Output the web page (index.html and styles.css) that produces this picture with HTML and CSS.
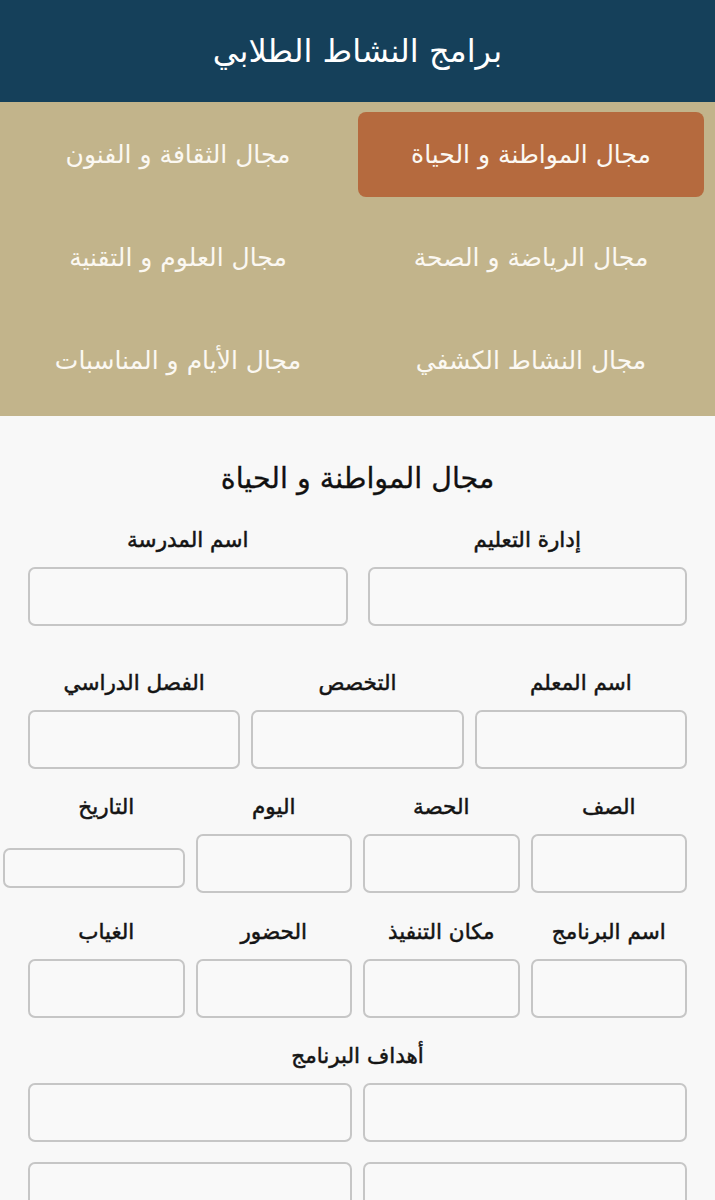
FILE: index.html
```html
<!DOCTYPE html>
<html lang="ar" dir="rtl">
<head>
<meta charset="utf-8">
<title>برامج النشاط الطلابي</title>
<link rel="stylesheet" href="styles.css">
</head>
<body>
<header class="topbar">
  <h1 class="topbar-title">برامج النشاط الطلابي</h1>
</header>
<nav class="domains">
  <a class="domain active">مجال المواطنة و الحياة</a>
  <a class="domain">مجال الثقافة و الفنون</a>
  <a class="domain">مجال الرياضة و الصحة</a>
  <a class="domain">مجال العلوم و التقنية</a>
  <a class="domain">مجال النشاط الكشفي</a>
  <a class="domain">مجال الأيام و المناسبات</a>
</nav>
<main class="form">
  <h2 class="form-title">مجال المواطنة و الحياة</h2>
  <div class="row cols-2 row-first">
    <div class="field"><label>إدارة التعليم</label><input type="text"></div>
    <div class="field"><label>اسم المدرسة</label><input type="text"></div>
  </div>
  <div class="row cols-3">
    <div class="field"><label>اسم المعلم</label><input type="text"></div>
    <div class="field"><label>التخصص</label><input type="text"></div>
    <div class="field"><label>الفصل الدراسي</label><input type="text"></div>
  </div>
  <div class="row cols-4 row-third">
    <div class="field"><label>الصف</label><input type="text"></div>
    <div class="field"><label>الحصة</label><input type="text"></div>
    <div class="field"><label>اليوم</label><input type="text"></div>
    <div class="field"><label>التاريخ</label><input type="text" class="date-input"></div>
  </div>
  <div class="row cols-4">
    <div class="field"><label>اسم البرنامج</label><input type="text"></div>
    <div class="field"><label>مكان التنفيذ</label><input type="text"></div>
    <div class="field"><label>الحضور</label><input type="text"></div>
    <div class="field"><label>الغياب</label><input type="text"></div>
  </div>
  <div class="goals">
    <label class="goals-label">أهداف البرنامج</label>
    <div class="goals-grid">
      <input type="text"><input type="text">
      <input type="text"><input type="text">
    </div>
  </div>
</main>
</body>
</html>
```
FILE: styles.css
```css
* { box-sizing: border-box; }
html, body {
  margin: 0;
  padding: 0;
  background: #f8f8f8;
  font-family: "DejaVu Sans", "Noto Sans", sans-serif;
  direction: rtl;
}
.topbar {
  height: 102px;
  background: #15405a;
  display: flex;
  align-items: center;
  justify-content: center;
}
.topbar-title {
  margin: 0;
  color: #ffffff;
  font-size: 32px;
  line-height: 40px;
  font-weight: normal;
}
.domains {
  background: #c2b48b;
  display: grid;
  grid-template-columns: 346px 346px;
  column-gap: 7px;
  row-gap: 18px;
  padding: 10px 11px 13px 5px;
}
.domain {
  height: 85px;
  border-radius: 8px;
  display: flex;
  align-items: center;
  justify-content: center;
  color: #fbf8f2;
  font-size: 25px;
  line-height: 32px;
}
.domain.active {
  background: #b56a3e;
}
.form {
  padding: 44px 28px 0 28px;
}
.form-title {
  margin: 0 0 30px 0;
  text-align: center;
  font-size: 28.5px;
  line-height: 38px;
  font-weight: normal;
  color: #111111;
  -webkit-text-stroke: 0.3px #111111;
}
.row {
  display: grid;
  column-gap: 11px;
  margin-bottom: 26px;
}
.row-first { margin-bottom: 45px; column-gap: 20px; }
.row-third { margin-bottom: 27px; }
.cols-2 { grid-template-columns: 1fr 1fr; }
.cols-3 { grid-template-columns: 1fr 1fr 1fr; }
.cols-4 { grid-template-columns: 1fr 1fr 1fr 1fr; }
.field {
  display: flex;
  flex-direction: column;
  align-items: stretch;
  min-width: 0;
}
.field label, .goals-label {
  display: block;
  text-align: center;
  font-size: 21.5px;
  line-height: 24px;
  font-weight: normal;
  color: #141414;
  -webkit-text-stroke: 0.5px #141414;
  margin-bottom: 15px;
}
input {
  display: block;
  width: 100%;
  height: 59px;
  margin: 0;
  background: #f9f9f9;
  border: 2px solid #c6c6c6;
  border-radius: 7px;
  outline: none;
}
.date-input {
  width: 182px;
  height: 40px;
  margin-top: 14px;
  align-self: flex-start;
}
.goals-grid {
  display: grid;
  grid-template-columns: 1fr 1fr;
  column-gap: 11px;
  row-gap: 20px;
}
```
